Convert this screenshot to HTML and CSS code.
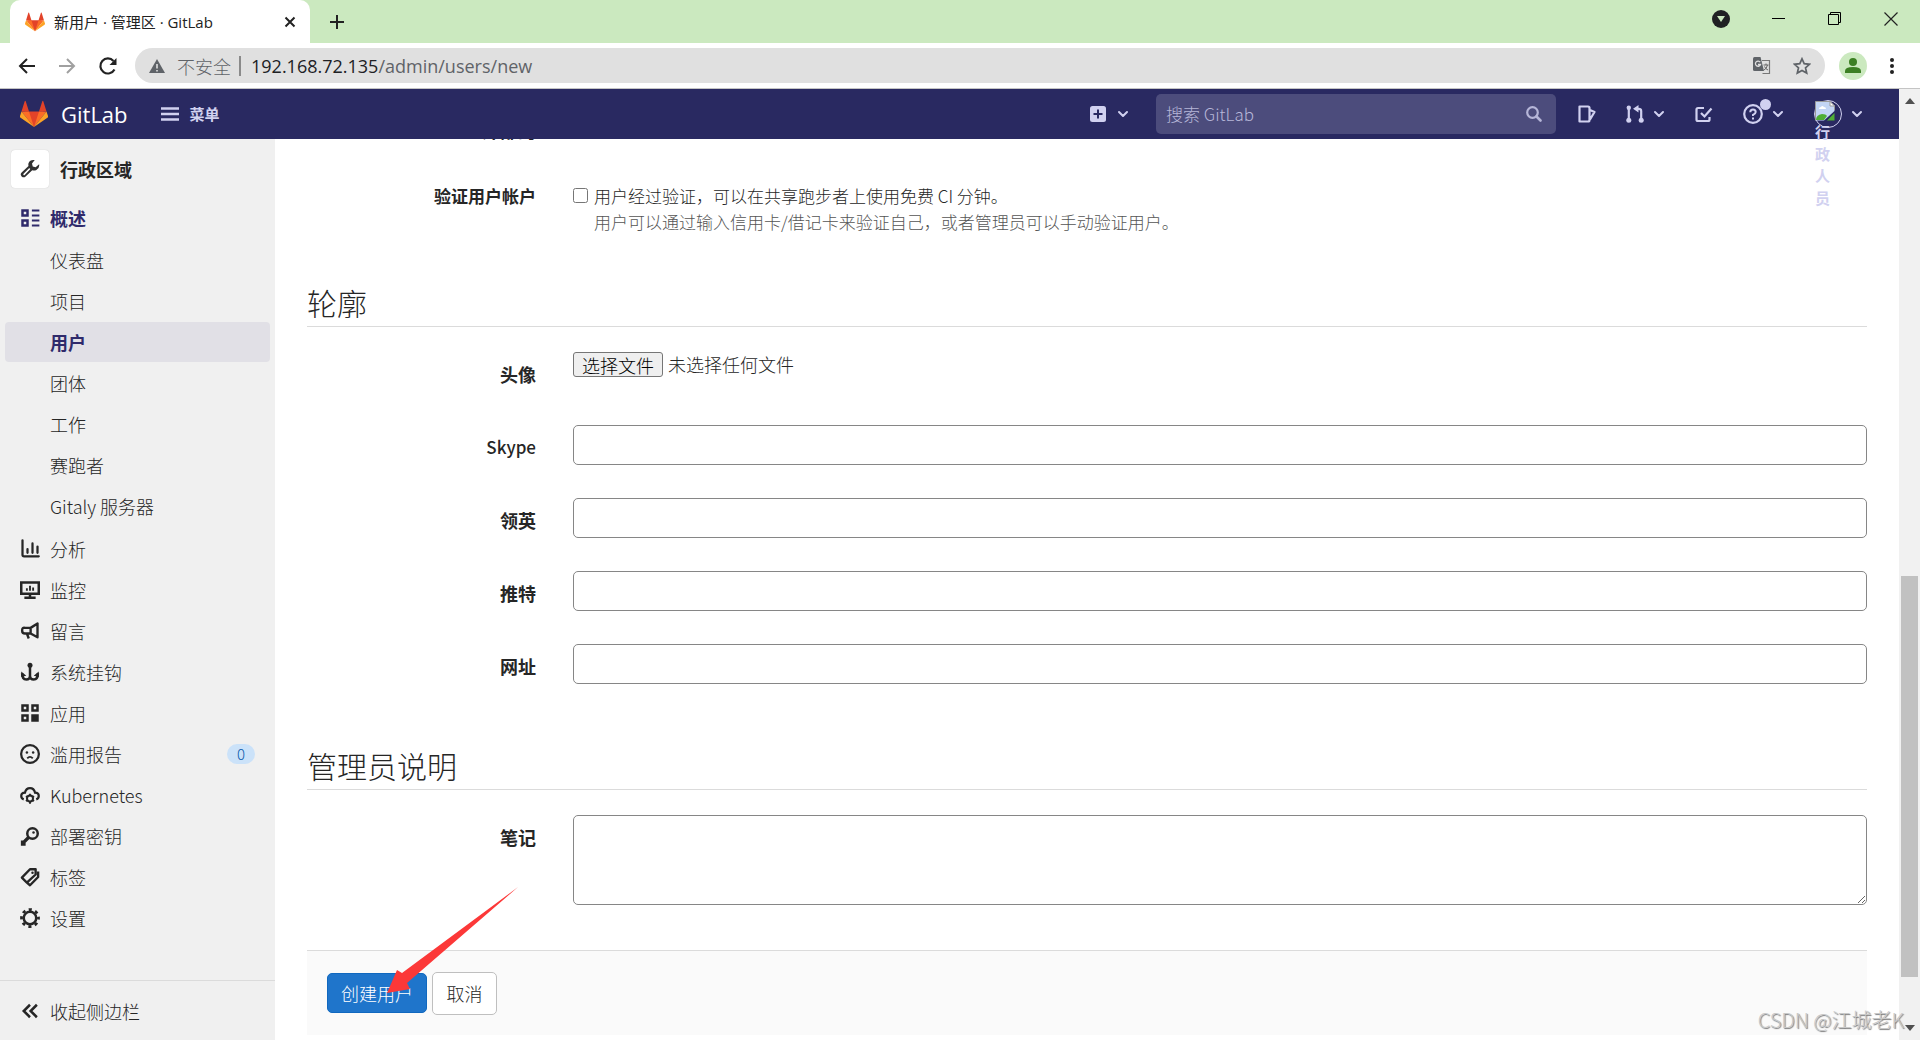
FILE: index.html
```html
<!DOCTYPE html>
<html lang="zh-CN">
<head>
<meta charset="utf-8">
<title>新用户 · 管理区 · GitLab</title>
<link rel="stylesheet" href="styles.css">
</head>
<body>
<svg class="defs" aria-hidden="true">
  <symbol id="tanuki" viewBox="0 0 28 28">
    <path fill="#e24329" d="M14 27 4.500 11.500h19z"/>
    <path fill="#fc6d26" d="M14 27 9 11.500H1.500zM14 27l5-15.500h7.500z"/>
    <path fill="#fca326" d="M1.500 11.500 0 16q-.3 1 .6 1.700L14 27zM26.500 11.500 28 16q.3 1-.6 1.700L14 27z"/>
    <path fill="#e24329" d="M1.500 11.500H9L5.700 1.200q-.5-1-1 0zM26.500 11.500H19l3.300-10.300q.5-1 1 0z"/>
  </symbol>
  <symbol id="chev" viewBox="0 0 12 12"><path d="M2 4l4 4 4-4" fill="none" stroke="currentColor" stroke-width="2" stroke-linecap="round" stroke-linejoin="round"/></symbol>
</svg>
<div class="window">
  <header class="tabstrip">
    <div class="tab">
      <svg class="favicon"><use href="#tanuki"/></svg>
      <span class="tab-title">新用户 · 管理区 · GitLab</span>
      <button class="plain" aria-label="关闭标签页"><svg width="12" height="12" viewBox="0 0 12 12"><path d="M1.500 1.500l9 9M10.500 1.500l-9 9" stroke="#222" stroke-width="2"/></svg></button>
    </div>
    <button class="plain newtab" aria-label="新标签页"><svg width="16" height="16" viewBox="0 0 16 16"><path d="M8 1v14M1 8h14" stroke="#222" stroke-width="2"/></svg></button>
    <div class="wincontrols">
      <button class="plain" aria-label="标签搜索"><svg width="18" height="18" viewBox="0 0 18 18"><circle cx="9" cy="9" r="9" fill="#202124"/><path d="M5 6h8l-4 6z" fill="#cbe9bf"/></svg></button>
      <button class="plain" aria-label="最小化"><svg width="14" height="14" viewBox="0 0 14 14"><path d="M0 6.500h13" stroke="#000"/></svg></button>
      <button class="plain" aria-label="还原"><svg width="14" height="14" viewBox="0 0 14 14"><path d="M.5 2.500h10v10H.5zM2.500 2.500v-2h10v10h-2" fill="none" stroke="#000"/></svg></button>
      <button class="plain" aria-label="关闭"><svg width="14" height="14" viewBox="0 0 14 14"><path d="M.5.5l13 13M13.500.5l-13 13" stroke="#222" stroke-width="1.200"/></svg></button>
    </div>
  </header>
  <div class="toolbar">
    <button class="plain" aria-label="后退"><svg width="18" height="18" viewBox="0 0 18 18"><path d="M17 9H2M9 2L2 9l7 7" fill="none" stroke="#222" stroke-width="2"/></svg></button>
    <button class="plain" aria-label="前进"><svg width="18" height="18" viewBox="0 0 18 18"><path d="M1 9h15M9 2l7 7-7 7" fill="none" stroke="#a0a0a0" stroke-width="2"/></svg></button>
    <button class="plain" aria-label="重新加载"><svg width="20" height="20" viewBox="0 0 20 20"><path d="M16.500 13.500A7.500 7.500 0 1 1 15.500 5" fill="none" stroke="#222" stroke-width="2.200"/><path d="M18.500 2v7h-7z" fill="#222"/></svg></button>
    <div class="omnibox">
      <svg width="16" height="16" viewBox="0 0 16 16"><path d="M8 1l8 14H0z" fill="#5f6368"/><path d="M8 6v4.500M8 12v1.600" stroke="#e0e0e0" stroke-width="1.600"/></svg>
      <span class="insecure">不安全</span>
      <span class="url">192.168.72.135<span>/admin/users/new</span></span>
      <svg width="18" height="18" viewBox="0 0 18 18"><path d="M9 3.500h7.500v13H9.500" fill="none" stroke="#777" stroke-width="1.200"/><path d="M1.500 0h6l3.500 14H1.500Q0 14 0 12.500v-11Q0 0 1.500 0z" fill="#5f6368"/><path d="M7.200 5.200A2.600 2.600 0 1 0 7.500 7.500H5" fill="none" stroke="#e0e0e0" stroke-width="1.300"/><path d="M10.500 8h5M13 6.500V8M14.500 8q-1 4-3.500 5M11.500 9.500q1 2.500 3.500 3.500" fill="none" stroke="#666"/></svg>
      <svg width="18" height="18" viewBox="0 0 18 18"><path d="M9 1.800l2.200 4.900 5.300.6-4 3.500 1.200 5.300L9 13.400l-4.700 2.700 1.200-5.300-4-3.500 5.300-.6z" fill="none" stroke="#5f6368" stroke-width="1.700"/></svg>
    </div>
    <svg width="28" height="28" viewBox="0 0 28 28"><circle cx="14" cy="14" r="14" fill="#cbe9bf"/><circle cx="14" cy="10" r="4" fill="#3b7f23"/><path d="M6 21v-2q0-4 8-4t8 4v2z" fill="#3b7f23"/></svg>
    <button class="plain" aria-label="菜单"><svg width="6" height="18" viewBox="0 0 6 18"><g fill="#222"><circle cx="3" cy="3" r="2"/><circle cx="3" cy="9" r="2"/><circle cx="3" cy="15" r="2"/></g></svg></button>
  </div>
  <div class="viewport">
    <div class="page">
      <nav class="navbar">
        <a class="brand" href="#"><svg class="logo"><use href="#tanuki"/></svg>GitLab</a>
        <button class="plain menu"><svg width="18" height="16" viewBox="0 0 18 16"><path d="M0 2.500h18M0 8h18M0 13.500h18" stroke="currentColor" stroke-width="2.500"/></svg>菜单</button>
        <button class="plain plus" aria-label="新建"><svg width="16" height="16" viewBox="0 0 16 16"><rect width="16" height="16" rx="2.500" fill="currentColor"/><path d="M8 3.500v9M3.500 8h9" stroke="#292961" stroke-width="2"/></svg><svg class="chev"><use href="#chev"/></svg></button>
        <div class="search">
          <input type="text" placeholder="搜索 GitLab" aria-label="搜索 GitLab">
          <svg width="16" height="16" viewBox="0 0 16 16"><circle cx="6.500" cy="6.500" r="5.300" fill="none" stroke="currentColor" stroke-width="2.200"/><path d="M10.500 10.500l4 4" stroke="currentColor" stroke-width="2.600" stroke-linecap="round"/></svg>
        </div>
        <div class="navicons">
          <a href="#" aria-label="议题"><svg width="18" height="18" viewBox="0 0 18 18"><path d="M1.500 1.500h8.500q1.500 0 1.500 1.500v12q0 1.500-1.500 1.500H1.500zM12 5l4.500 2-4.500 7.500" fill="none" stroke="currentColor" stroke-width="2.200" stroke-linejoin="round"/></svg></a>
          <a href="#" aria-label="合并请求"><svg width="18" height="18" viewBox="0 0 18 18"><g fill="currentColor"><circle cx="2.800" cy="2.800" r="2.200"/><circle cx="2.800" cy="15.200" r="2.500"/><circle cx="15.200" cy="15.200" r="2.500"/><path d="M12.500 0v7.500L7 3.800z"/></g><path d="M2.800 3v12M15.200 15V6q0-2.200-2.500-2.200H11" fill="none" stroke="currentColor" stroke-width="2.200"/></svg><svg class="chev"><use href="#chev"/></svg></a>
          <a href="#" aria-label="待办事项"><svg width="18" height="18" viewBox="0 0 18 18"><path d="M9 3H3Q1.500 3 1.500 4.500v10Q1.500 16 3 16h10q1.500 0 1.500-1.500V12M6 8l3.500 3.500L16.500 3.500" fill="none" stroke="currentColor" stroke-width="2.200"/></svg></a>
          <a href="#" class="help" aria-label="帮助"><svg width="20" height="20" viewBox="0 0 20 20"><circle cx="10" cy="10" r="8.800" fill="none" stroke="currentColor" stroke-width="2.200"/><path d="M7.300 8.200Q7.300 5.500 10 5.500t2.700 2.500Q12.700 9.500 10 10.800V12M10 13.500v2" fill="none" stroke="currentColor" stroke-width="2"/></svg><i class="dot"></i><svg class="chev"><use href="#chev"/></svg></a>
          <a href="#" class="user"><span class="avatar"><svg width="20" height="20" viewBox="0 0 20 20"><path d="M.5.5H15l4.500 4.500v5L9 19.500H.5z" fill="#c3d5f5"/><path d="M.5 19.500V.5H15l4.500 4.500v4" fill="none" stroke="#9a9a9a"/><path d="M15 .5V5h4.500z" fill="#fff" stroke="#9a9a9a"/><path d="M4 8q0-2 2-2 1-2 3 0 2 0 2 2z" fill="#fff"/><path d="M1 19q0-5 6-6 4 0 5 2l-3 4zM19.500 12v7.500H12z" fill="#4fae35"/></svg><span class="alt">行政人员</span></span><svg class="chev"><use href="#chev"/></svg></a>
        </div>
      </nav>
      <div class="columns">
        <aside class="sidebar">
          <a class="context" href="#"><span class="ctx-icon"><svg width="20" height="20" viewBox="0 0 16 16"><path d="M15.300 4.200l-2.800 2.300-2.300-.6-.6-2.300L11.800.8Q8 .2 6.800 3.300q-.3 1 0 2.200L1.300 10.700q-1.500 1.500 0 3.200 1.700 1.500 3.200 0L9.800 8.900q1.700.5 3.300-.2Q15.800 7.300 15.300 4.200z" fill="#303030"/><path d="M3.300 12.300L7.500 8" stroke="#fff" stroke-width="1.300" stroke-linecap="round"/></svg></span>行政区域</a>
          <ul class="menu-list">
            <li><a class="active" href="#"><svg viewBox="0 0 16 16"><g fill="none" stroke="currentColor" stroke-width="2"><rect x="2" y="2" width="4" height="4"/><rect x="2" y="10" width="4" height="4"/><path d="M9.500 2h6M9.500 6h6M9.500 10h6M9.500 14h6" stroke-width="1.600"/></g></svg>概述</a>
              <ul class="sub">
                <li><a href="#">仪表盘</a></li>
                <li><a href="#">项目</a></li>
                <li><a class="active current" href="#">用户</a></li>
                <li><a href="#">团体</a></li>
                <li><a href="#">工作</a></li>
                <li><a href="#">赛跑者</a></li>
                <li><a href="#">Gitaly 服务器</a></li>
              </ul></li>
            <li><a href="#"><svg viewBox="0 0 16 16"><path d="M2 1v11.500q0 1.300 1.300 1.300H15M6 8v3M10 3.500V11M14 6v5" fill="none" stroke="currentColor" stroke-width="1.800" stroke-linecap="round"/></svg>分析</a></li>
            <li><a href="#"><svg viewBox="0 0 16 16"><path d="M1 2h14v9H1zM8 11v3M3.500 14.200h9" fill="none" stroke="currentColor" stroke-width="2"/><path d="M5.500 6.500v2M8 4.500v4M10.500 6v2.500" stroke="currentColor" stroke-width="1.500"/></svg>监控</a></li>
            <li><a href="#"><svg viewBox="0 0 16 16"><path d="M14 2v11L8.500 10H4Q1.700 10 1.700 7.500T4 5.500h4.500zM8.500 5.500V10M5.500 10l1.500 4" fill="none" stroke="currentColor" stroke-width="1.900" stroke-linejoin="round"/></svg>留言</a></li>
            <li><a href="#"><svg viewBox="0 0 16 16"><circle cx="8" cy="2.500" r="2" fill="currentColor"/><path d="M8 3v11M8 11q0 3-3 3-3.300 0-3.300-5M8 11q0 3 3 3 3.300 0 3.300-5" fill="none" stroke="currentColor" stroke-width="2"/><path d="M1 7.500L5 11l-4 1zM15 7.500L11 11l4 1z" fill="currentColor"/></svg>系统挂钩</a></li>
            <li><a href="#"><svg viewBox="0 0 16 16"><g fill="none" stroke="currentColor" stroke-width="2"><rect x="2" y="2" width="4" height="4"/><rect x="10" y="2" width="4" height="4"/><rect x="2" y="10" width="4" height="4"/><rect x="10" y="10" width="4" height="4" fill="currentColor"/></g></svg>应用</a></li>
            <li><a href="#"><svg viewBox="0 0 16 16"><circle cx="8" cy="8" r="7.100" fill="none" stroke="currentColor" stroke-width="1.800"/><circle cx="5.500" cy="6.800" r="1" fill="currentColor"/><circle cx="10.500" cy="6.800" r="1" fill="currentColor"/><path d="M5.800 11.500q2.200-2.500 4.400 0" fill="none" stroke="currentColor" stroke-width="1.500"/></svg>滥用报告<span class="badge">0</span></a></li>
            <li><a href="#"><svg viewBox="0 0 16 16"><path d="M3 11.500Q1 10.800 1 8.700 1 6 4 6q.8-3.500 4-3.500T12 6q3 0 3 2.700 0 2.100-2 2.800" fill="none" stroke="currentColor" stroke-width="1.800"/><circle cx="8" cy="10.800" r="2.400" fill="none" stroke="currentColor" stroke-width="1.600"/><path d="M8 7v2M8 13v2M4.700 9l1.600.8M9.700 12l1.600.8M4.700 12.800l1.600-.8M9.700 9.800l1.600-.8" stroke="currentColor" stroke-width="1.500"/></svg>Kubernetes</a></li>
            <li><a href="#"><svg viewBox="0 0 16 16"><circle cx="10" cy="6" r="4.200" fill="none" stroke="currentColor" stroke-width="2"/><circle cx="10.800" cy="5.200" r="1" fill="currentColor"/><path d="M7 9l-5 5M2 11.500v3h2.500" fill="none" stroke="currentColor" stroke-width="2.600"/></svg>部署密钥</a></li>
            <li><a href="#"><svg viewBox="0 0 16 16"><path d="M1.500 8.500L8 1.800h4.500V6L5.500 12.500zM14.500 3.500V8L8 14.600 5.500 12.500" fill="none" stroke="currentColor" stroke-width="1.900" stroke-linejoin="round"/><circle cx="10" cy="4.500" r="1" fill="currentColor"/></svg>标签</a></li>
            <li><a href="#"><svg viewBox="0 0 16 16"><circle cx="8" cy="8" r="5" fill="none" stroke="currentColor" stroke-width="2"/><circle cx="8" cy="8" r="6.800" fill="none" stroke="currentColor" stroke-width="2.200" stroke-dasharray="2.500 2.840" stroke-dashoffset="1.250"/></svg>设置</a></li>
          </ul>
          <button class="plain collapse"><svg viewBox="0 0 16 16"><path d="M8 3L3 8l5 5M13.500 3l-5 5 5 5" fill="none" stroke="currentColor" stroke-width="2"/></svg>收起侧边栏</button>
        </aside>
        <main>
          <form class="form">
            <div class="row external">
              <label for="ext">外部的</label>
              <div class="control"><div class="check"><input type="checkbox" id="ext"><div>外部用户无法看到内部，或者私人项目除非明确授予访问权限。此外外部，用户不能创建项目、群组或个人代码片段。</div></div></div>
            </div>
            <div class="row verify">
              <label for="verify">验证用户帐户</label>
              <div class="control"><div class="check"><input type="checkbox" id="verify"><div>用户经过验证，可以在共享跑步者上使用免费 CI 分钟。<p class="hint">用户可以通过输入信用卡/借记卡来验证自己，或者管理员可以手动验证用户。</p></div></div></div>
            </div>
            <h2>轮廓</h2>
            <div class="row file">
              <label for="avatar">头像</label>
              <div class="control filepick"><button type="button" id="avatar">选择文件</button><span>未选择任何文件</span></div>
            </div>
            <div class="row"><label class="latin" for="skype">Skype</label><input class="text" type="text" id="skype"></div>
            <div class="row"><label for="linkedin">领英</label><input class="text" type="text" id="linkedin"></div>
            <div class="row"><label for="twitter">推特</label><input class="text" type="text" id="twitter"></div>
            <div class="row"><label for="site">网址</label><input class="text" type="text" id="site"></div>
            <h2 class="notes">管理员说明</h2>
            <div class="row"><label for="note">笔记</label><textarea id="note"></textarea></div>
            <div class="actions">
              <button type="submit" class="primary">创建用户</button>
              <a class="cancel" href="#">取消</a>
              <svg class="arrow" width="132" height="106" viewBox="0 0 132 106"><path d="M131 0L15 86 10 83 0 106l23-4-3-6z" fill="#fc3838"/></svg>
            </div>
          </form>
        </main>
      </div>
    </div>
    <div class="scrollbar"><svg width="10" height="6"><path d="M5 0l5 6H0z" fill="#505050"/></svg><div class="thumb"></div><svg width="10" height="6"><path d="M0 0h10L5 6z" fill="#505050"/></svg></div>
  </div>
  <div class="watermark">CSDN @江城老K</div>
</div>
</body>
</html>
```
FILE: styles.css
```css
* { box-sizing: border-box; }
body {
  margin: 0;
  font: 300 18px/26px "Noto Sans CJK SC", sans-serif;
  color: #262626;
}
a { color: inherit; text-decoration: none; }
ul { list-style: none; margin: 0; padding: 0; }
svg { flex: none; display: block; }
.defs { position: absolute; width: 0; height: 0; }
.plain { border: 0; padding: 0; background: none; font: inherit; color: inherit; display: flex; align-items: center; }
.window { position: relative; display: flex; flex-direction: column; height: 100vh; overflow: hidden; background: #fff; }

/* browser frame */
.tabstrip { flex: none; display: flex; height: 43px; padding-left: 10px; background: #cbe9bf; }
.tab { display: flex; align-items: center; width: 300px; padding: 0 14px 0 15px; background: #fff; border-radius: 10px 10px 0 0; }
.favicon { width: 20px; height: 20px; margin-right: 9px; }
.tab-title { flex: 1; font-family: "Open Sans", "Noto Sans CJK SC", sans-serif; font-size: 15px; font-weight: 400; color: #222; }
.newtab { margin-left: 19px; }
.wincontrols { display: flex; align-items: center; gap: 42px; margin-left: auto; padding: 0 22px 6px 0; }
.toolbar { flex: none; display: flex; align-items: center; height: 46px; padding: 0 25px 0 18px; border-bottom: 1px solid #c4c4c4; gap: 22px; }
.omnibox { flex: 1; display: flex; align-items: center; height: 35px; padding: 0 14px; margin: 0 -8px 0 -5px; border-radius: 18px; background: #e0e0e0; gap: 22px; }
.insecure { margin-left: -10px; color: #5f6368; padding-right: 8px; border-right: 2px solid #8a8a8a; line-height: 20px; }
.url { flex: 1; margin-left: -12px; font-family: "Open Sans", sans-serif; font-weight: 400; color: #202124; }
.url span { color: #5f6368; }

/* viewport */
.viewport { flex: 1; min-height: 0; display: flex; }
.page { flex: 1; min-width: 0; display: flex; flex-direction: column; }
.scrollbar { width: 21px; display: flex; flex-direction: column; align-items: center; padding: 9px 0; background: #f1f1f1; }
.thumb { flex: none; width: 17px; height: 43%; margin: auto 0 48px; background: #c1c1c1; }

.navbar { position: relative; z-index: 1; flex: none; display: flex; align-items: center; height: 50px; padding: 0 36px 0 20px; background: #292961; color: #d1d1f0; }
.brand { display: flex; align-items: center; gap: 13px; color: #fff; font-size: 22px; font-family: "Open Sans", sans-serif; font-weight: 400; }
.logo { width: 28px; height: 28px; }
.menu { margin-left: 33px; gap: 11px; font-size: 15px; font-weight: 700; }
.chev { width: 12px; height: 12px; }
.plus { margin-left: auto; gap: 11px; }
.search { display: flex; align-items: center; width: 400px; height: 40px; margin-left: 27px; padding: 0 14px 0 10px; border-radius: 5px; background: #4c4c7c; color: #b6b6d8; }
.search input { flex: 1; min-width: 0; padding: 0; border: 0; outline: 0; background: none; font: inherit; font-size: 17px; color: inherit; }
.search input::placeholder { color: #b6b6d8; opacity: 1; }
.navicons { display: flex; align-items: center; height: 50px; margin-left: 22px; gap: 30px; }
.navicons a { position: relative; display: flex; align-items: center; gap: 9px; }
.dot { position: absolute; left: 17px; top: -5px; width: 11px; height: 11px; border-radius: 50%; background: #d1d1f0; }
.avatar { position: relative; width: 28px; height: 28px; border: 1px solid #d1d1f0; border-radius: 50%; }
.alt { position: absolute; left: 0; top: 20px; width: 16px; font-size: 15px; line-height: 22px; font-weight: 700; word-break: break-all; }

.columns { flex: 1; min-height: 0; display: flex; }
.sidebar { flex: none; width: 275px; display: flex; flex-direction: column; background: #f0f0f0; }
.context { display: flex; align-items: center; gap: 11px; padding: 11px 11px 10px; font-weight: 700; }
.ctx-icon { display: grid; place-items: center; width: 38px; height: 38px; background: #fff; border-radius: 4px; box-shadow: 0 0 1px #bbb; }
.menu-list a { display: flex; align-items: center; height: 40px; margin: 0 5px 1px; padding: 0 15px; border-radius: 4px; }
.menu-list svg, .collapse svg { width: 20px; height: 20px; margin-right: 10px; }
.sub { padding: 1px 0 2px; }
.menu-list .sub a { padding-left: 45px; }
.menu-list .active { color: #2f2a6b; font-weight: 700; }
.menu-list .current { background: #e1e0e6; }
.badge { margin-left: auto; width: 28px; height: 20px; border-radius: 10px; background: #cbe2f9; color: #0b5cad; font-size: 15px; line-height: 20px; text-align: center; }
.collapse { height: 60px; margin-top: auto; padding: 0 20px; border-top: 1px solid #dbdbdb; }

main { flex: 1; min-width: 0; overflow: hidden; padding: 0 32px; }
.form { margin-top: -22px; }
.row { display: grid; grid-template-columns: 229px 1fr; column-gap: 37px; margin-bottom: 33px; }
.row label { padding-top: 9px; text-align: right; font-weight: 700; }
.row .latin { font-size: 17px; font-weight: 500; }
.external { margin-bottom: 32px; }
.row.external label, .row.verify label { padding-top: 0; }
.row.verify label { font-size: 17px; }
.check { display: flex; gap: 6px; font-size: 17px; }
.check input { flex: none; width: 15px; height: 15px; margin: 5px 0 0; }
.external .check input { margin-top: 2px; }
.verify { margin-bottom: 0; padding-top: 8px; }
.hint { margin: 0; color: #555; }
h2 { margin: 48px 0 25px; padding-bottom: 5px; border-bottom: 1px solid #dbdbdb; font-size: 30px; line-height: 38px; font-weight: 300; }
.file { margin-bottom: 38px; }
.filepick { display: flex; align-items: flex-start; gap: 5px; line-height: 25px; }
.filepick button { height: 25px; width: 90px; padding: 0; border: 1px solid #767676; border-radius: 3px; background: #efefef; font: inherit; line-height: 22px; color: #000; }
.text { height: 40px; border: 1px solid #868686; border-radius: 5px; padding: 0 14px; font: inherit; }
.notes { margin-top: 62px; }
textarea { height: 90px; border: 1px solid #868686; border-radius: 5px; resize: vertical; font: inherit; }
.actions { position: relative; display: flex; align-items: center; gap: 5px; height: 85px; margin-top: 45px; padding: 0 20px; border-top: 1px solid #dbdbdb; background: #fafafa; }
.primary { width: 100px; height: 40px; padding: 0; border: 1px solid #1068bf; border-radius: 5px; background: #1f75cb; color: #fff; font: inherit; }
.cancel { display: grid; place-items: center; width: 65px; height: 43px; border: 1px solid #bfbfbf; border-radius: 5px; background: #fff; }
.arrow { position: absolute; left: 80px; top: -64px; }
.watermark { position: absolute; right: 16px; bottom: 7px; font-size: 20px; color: #c8c8c8; text-shadow: 1px 1px 1px #777; }
```
